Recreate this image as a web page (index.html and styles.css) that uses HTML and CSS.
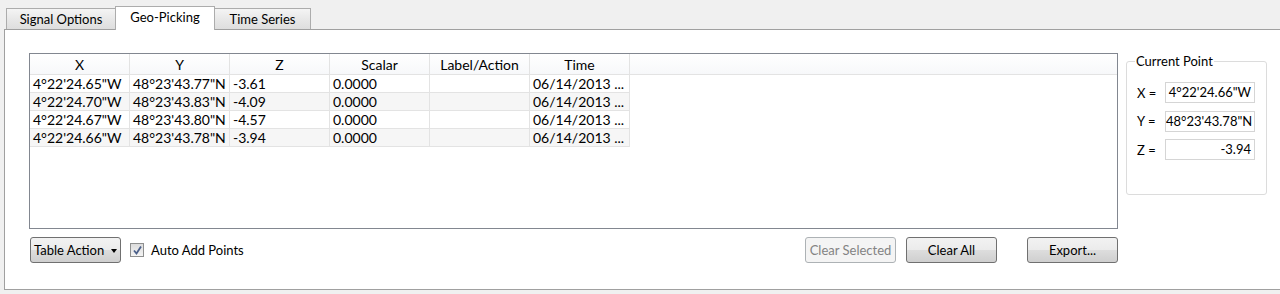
FILE: index.html
```html
<!DOCTYPE html>
<html>
<head>
<meta charset="utf-8">
<link rel="stylesheet" href="styles.css">
</head>
<body>
<div class="tabbar">
  <div class="tab tab-signal">Signal Options</div>
  <div class="tab tab-active">Geo-Picking</div>
  <div class="tab tab-time">Time Series</div>
</div>
<div class="pane">
  <div class="main">
    <div class="table">
      <div class="thead">
        <div class="th">X</div>
        <div class="th">Y</div>
        <div class="th">Z</div>
        <div class="th">Scalar</div>
        <div class="th">Label/Action</div>
        <div class="th">Time</div>
        <div class="th th-fill"></div>
      </div>
      <div class="tr">
        <div class="td">4°22'24.65"W</div><div class="td">48°23'43.77"N</div><div class="td">-3.61</div><div class="td">0.0000</div><div class="td"></div><div class="td">06/14/2013 ...</div>
      </div>
      <div class="tr alt">
        <div class="td">4°22'24.70"W</div><div class="td">48°23'43.83"N</div><div class="td">-4.09</div><div class="td">0.0000</div><div class="td"></div><div class="td">06/14/2013 ...</div>
      </div>
      <div class="tr">
        <div class="td">4°22'24.67"W</div><div class="td">48°23'43.80"N</div><div class="td">-4.57</div><div class="td">0.0000</div><div class="td"></div><div class="td">06/14/2013 ...</div>
      </div>
      <div class="tr alt">
        <div class="td">4°22'24.66"W</div><div class="td">48°23'43.78"N</div><div class="td">-3.94</div><div class="td">0.0000</div><div class="td"></div><div class="td">06/14/2013 ...</div>
      </div>
    </div>
    <div class="actions">
      <div class="btn btn-combo">Table Action <span class="caret"></span></div>
      <label class="check">
        <span class="box"><svg width="11" height="11" viewBox="0 0 11 11"><path d="M2 5.5 L4.5 8.5 L9 1.5" fill="none" stroke="#4a5f8a" stroke-width="1.8"/></svg></span>
        Auto Add Points
      </label>
      <div class="spacer"></div>
      <div class="btn btn-disabled">Clear Selected</div>
      <div class="btn btn-clear">Clear All</div>
      <div class="btn btn-export">Export...</div>
    </div>
  </div>
  <div class="group">
    <div class="group-title">Current Point</div>
    <div class="field"><span class="flabel">X =</span><div class="input">4°22'24.66"W</div></div>
    <div class="field"><span class="flabel">Y =</span><div class="input">48°23'43.78"N</div></div>
    <div class="field"><span class="flabel">Z =</span><div class="input">-3.94</div></div>
  </div>
</div>
</body>
</html>
```

FILE: styles.css
```css
* { box-sizing: border-box; }
html, body { margin: 0; padding: 0; }
body {
  width: 1280px;
  height: 294px;
  background: #f0f0f0;
  font-family: Lato, "Liberation Sans", sans-serif;
  font-size: 13px;
  color: #000;
  overflow: hidden;
}
.tabbar {
  display: flex;
  align-items: flex-end;
  height: 29px;
  padding: 6px 0 0 6px;
}
.tab {
  height: 21px;
  border: 1px solid #acacac;
  border-bottom: none;
  background: linear-gradient(#f4f4f4, #e8e8e8 50%, #dedede);
  display: flex;
  align-items: center;
  justify-content: center;
  padding-bottom: 1px;
}
.tab-signal { width: 110px; }
.tab-active {
  width: 100px;
  height: 24px;
  margin-left: -1px;
  margin-bottom: -1px;
  background: #fff;
  position: relative;
  z-index: 1;
  padding-bottom: 3px;
}
.tab-time { width: 97px; margin-left: -1px; }
.pane {
  margin-left: 4px;
  width: 1277px;
  height: 261px;
  border: 1px solid #a0a0a0;
  background: #fff;
  padding: 23px 13px 0 24px;
  display: grid;
  grid-template-columns: 1fr 141px;
  column-gap: 8px;
  align-items: start;
}
.main { display: flex; flex-direction: column; }
.table {
  height: 176px;
  border: 1px solid #828790;
  background: #fff;
}
.thead {
  display: flex;
  height: 21px;
  border-bottom: 1px solid #e3e3e3;
  background: linear-gradient(#ffffff, #f7f8fa);
}
.th {
  width: 100px;
  border-right: 1px solid #e3e3e3;
  text-align: center;
  line-height: 21px;
  font-size: 14px;
}
.th-fill { flex: 1; border-right: none; }
.tr {
  display: flex;
  width: 600px;
  height: 18px;
  border-bottom: 1px solid #e3e3e3;
}
.tr.alt { background: #f6f6f6; }
.td {
  width: 100px;
  border-right: 1px solid #e3e3e3;
  padding-left: 3px;
  line-height: 17px;
  font-size: 14px;
  white-space: nowrap;
  overflow: hidden;
}
.actions {
  display: flex;
  align-items: center;
  margin-top: 8px;
  height: 26px;
}
.btn {
  width: 91px;
  height: 26px;
  border: 1px solid #707070;
  border-radius: 3px;
  background: linear-gradient(#f2f2f2, #ebebeb 50%, #dddddd 51%, #cfcfcf);
  display: flex;
  align-items: center;
  justify-content: center;
}
.btn-combo { margin-left: 1px; justify-content: flex-start; padding-left: 3px; }
.caret {
  display: inline-block;
  width: 0; height: 0;
  border-left: 3px solid transparent;
  border-right: 3px solid transparent;
  border-top: 4px solid #000;
  margin-left: 7px;
  margin-top: 1px;
}
.check {
  display: flex;
  align-items: center;
  margin-left: 9px;
}
.box {
  width: 14px;
  height: 14px;
  border: 1px solid #8e8f8f;
  background: linear-gradient(#dcdcdc, #f4f4f4);
  display: flex;
  align-items: center;
  justify-content: center;
  margin-right: 7px;
}
.spacer { flex: 1; }
.btn-disabled {
  background: #f4f4f4;
  border-color: #adb2b5;
  color: #838383;
}
.btn-clear { margin-left: 10px; }
.btn-export { margin-left: 30px; }
.group {
  margin-top: 8px;
  height: 134px;
  border: 1px solid #dcdcdc;
  border-radius: 3px;
  position: relative;
  padding: 20px 0 0 10px;
}
.group-title {
  position: absolute;
  top: -9px;
  left: 8px;
  background: #fff;
  padding: 0 1px;
  line-height: 16px;
}
.field {
  display: flex;
  align-items: center;
  height: 21px;
  margin-bottom: 7.5px;
}
.flabel { width: 28px; }
.input {
  width: 90px;
  height: 21px;
  border: 1px solid #d5d5d5;
  text-align: right;
  padding-right: 3px;
  line-height: 19px;
  white-space: nowrap;
  overflow: hidden;
}
```
